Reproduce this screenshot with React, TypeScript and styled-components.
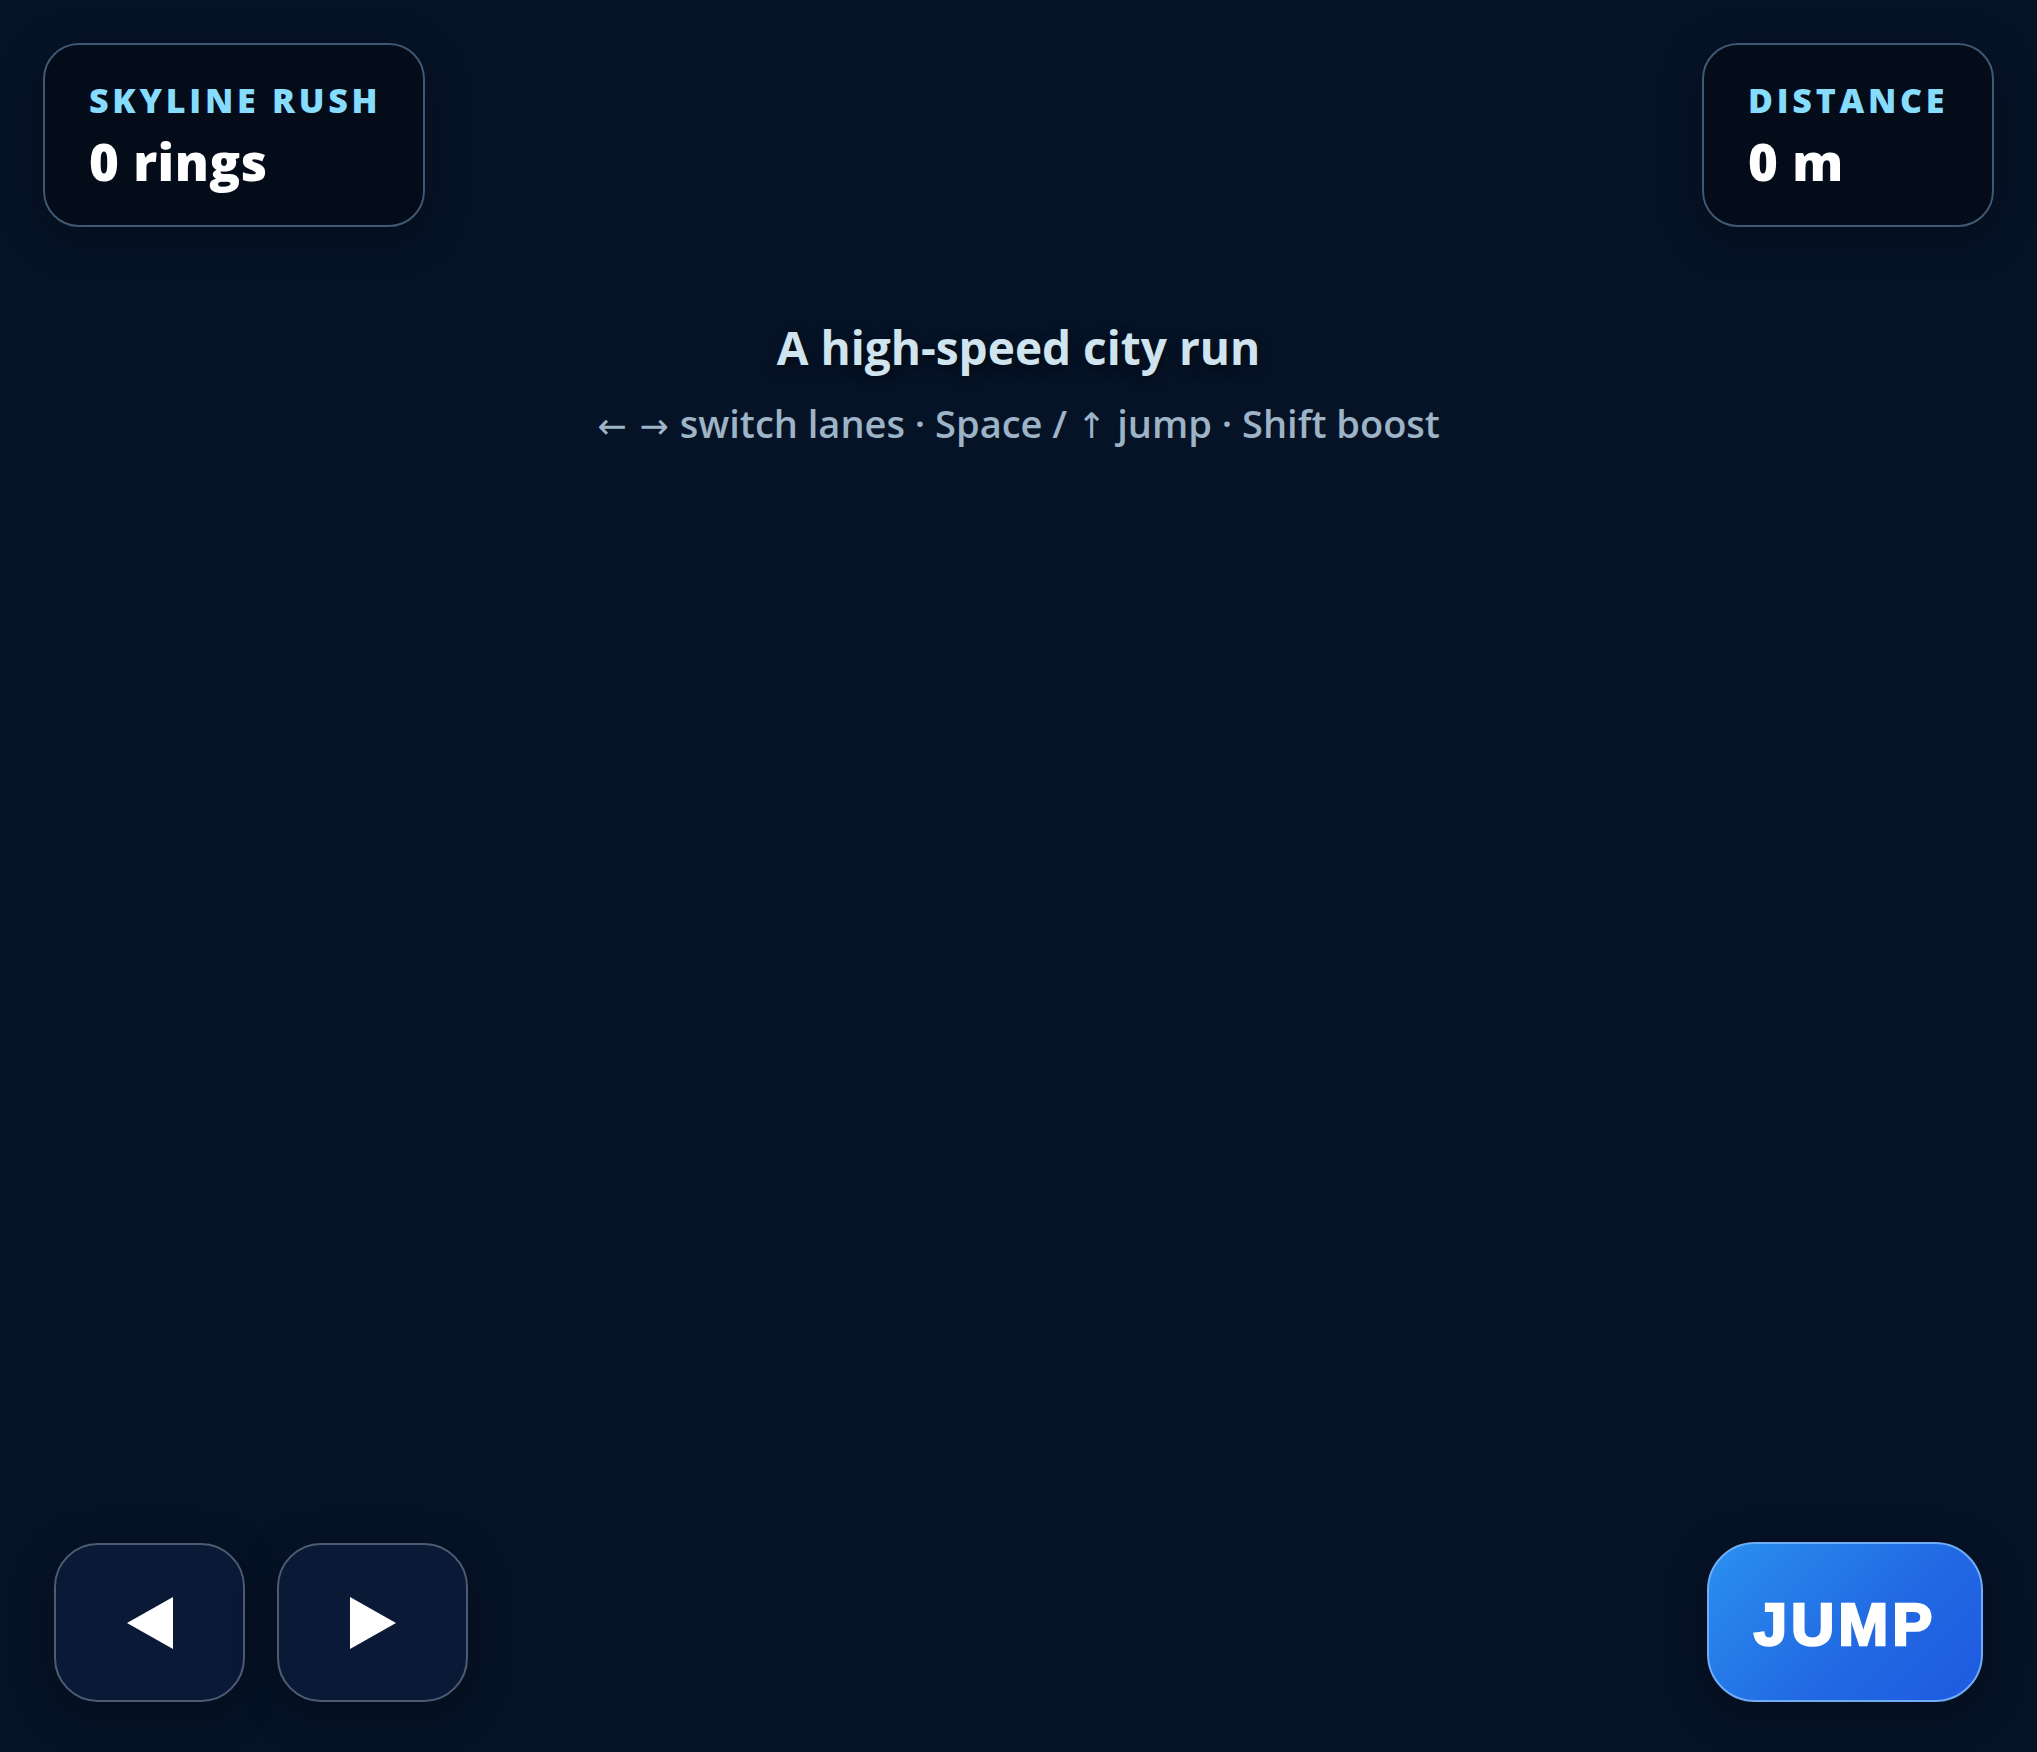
import * as React from "react";
import styled, { createGlobalStyle } from "styled-components";

const GlobalStyle = createGlobalStyle`
  html, body {
    margin: 0;
    padding: 0;
    background: #061327;
  }
  body {
    font-family: "Open Sans", "Noto Sans", sans-serif;
  }
  * {
    box-sizing: border-box;
  }
`;

interface StatProps {
  label: string;
  value: string;
  width: number;
}

const Stat: React.FC<StatProps> = (props) => {
  return (
    <StatCard $width={props.width}>
      <StatLabel>{props.label}</StatLabel>
      <StatValue>{props.value}</StatValue>
    </StatCard>
  );
};

const Arrow: React.FC<{ dir: "left" | "right" }> = ({ dir }) => (
  <svg width="46" height="52" viewBox="0 0 46 52">
    {dir === "left" ? (
      <polygon points="46,0 46,52 0,26" fill="#ffffff" />
    ) : (
      <polygon points="0,0 0,52 46,26" fill="#ffffff" />
    )}
  </svg>
);

export default function App() {
  return (
    <>
      <GlobalStyle />
      <Screen>
        <Hud>
          <Stat label="Skyline Rush" value="0 rings" width={382} />
          <Stat label="Distance" value="0 m" width={292} />
        </Hud>

        <Intro>
          <Title>A high-speed city run</Title>
          <Hint>
            <Keys>← →</Keys> switch lanes · Space / <Keys>↑</Keys> jump · Shift boost
          </Hint>
        </Intro>

        <Controls>
          <LaneButtons>
            <LaneButton aria-label="left">
              <Arrow dir="left" />
            </LaneButton>
            <LaneButton aria-label="right">
              <Arrow dir="right" />
            </LaneButton>
          </LaneButtons>

          <JumpButton>JUMP</JumpButton>
        </Controls>
      </Screen>
    </>
  );
}

const Screen = styled.div`
  width: 100%;
  height: 100vh;
  display: flex;
  flex-direction: column;
  background: #061327;
  overflow: hidden;
`;

const Hud = styled.div`
  display: flex;
  justify-content: space-between;
  align-items: flex-start;
  padding: 43px 43px 0;
`;

const StatCard = styled.div<{ $width: number }>`
  width: ${(p) => p.$width}px;
  height: 184px;
  padding: 34px 20px 0 44px;
  border: 2px solid #3f5873;
  border-radius: 36px;
  background: #040b19;
  box-shadow: 0 10px 40px rgba(0, 0, 0, 0.35);
`;

const StatLabel = styled.div`
  font-family: "Open Sans", sans-serif;
  font-weight: 800;
  font-size: 34px;
  line-height: 42px;
  letter-spacing: 0.11em;
  text-transform: uppercase;
  white-space: nowrap;
  color: #86dcfd;
`;

const StatValue = styled.div`
  margin-top: 9px;
  font-family: "Open Sans", sans-serif;
  font-weight: 800;
  font-size: 51px;
  line-height: 62px;
  letter-spacing: 0.5px;
  white-space: nowrap;
  color: #ffffff;
`;

const Intro = styled.div`
  flex: 1;
  display: flex;
  flex-direction: column;
  align-items: center;
  padding-top: 90px;
`;

const Title = styled.div`
  font-family: "Open Sans", sans-serif;
  font-weight: 700;
  font-size: 46px;
  line-height: 60px;
  color: #cfe4ef;
  text-shadow: 0 4px 12px rgba(0, 0, 0, 0.6);
`;

const Hint = styled.div`
  margin-top: 22px;
  font-family: "Open Sans", sans-serif;
  font-weight: 600;
  font-size: 38px;
  line-height: 48px;
  color: #9db3c6;
`;

const Keys = styled.span`
  font-family: "DejaVu Sans", sans-serif;
  font-weight: 400;
  font-size: 35px;
  letter-spacing: 1px;
`;

const Controls = styled.div`
  display: flex;
  justify-content: space-between;
  align-items: flex-end;
  padding: 0 54px 50px;
`;

const LaneButtons = styled.div`
  display: flex;
  gap: 32px;
`;

const LaneButton = styled.button`
  width: 191px;
  height: 159px;
  display: flex;
  align-items: center;
  justify-content: center;
  padding: 0;
  border: 2px solid #4c5c73;
  border-radius: 44px;
  background: #0a1a36;
  box-shadow: 0 10px 40px rgba(0, 0, 0, 0.35);
  cursor: pointer;
`;

const JumpButton = styled.button`
  width: 276px;
  height: 160px;
  padding: 4px 0 0;
  border: 2px solid #6fadf6;
  border-radius: 48px;
  background: linear-gradient(135deg, #2b90ef 0%, #2168e2 60%, #1f5ae0 100%);
  box-shadow: 0 10px 40px rgba(0, 0, 0, 0.35);
  font-family: "Liberation Sans", Arial, sans-serif;
  font-weight: 900;
  font-size: 60px;
  letter-spacing: 4px;
  color: #ffffff;
  -webkit-text-stroke: 2.5px #ffffff;
  cursor: pointer;
`;
